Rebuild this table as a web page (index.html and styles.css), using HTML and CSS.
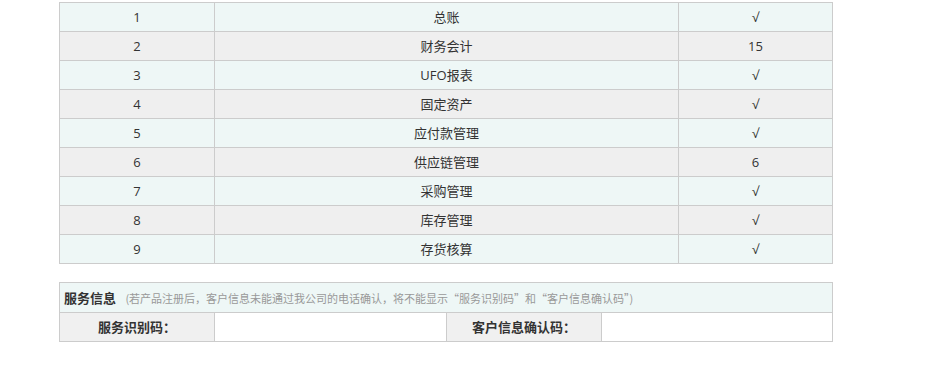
FILE: index.html
```html
<!DOCTYPE html>
<html lang="zh-CN">
<head>
  <meta charset="UTF-8" />
  <title>产品授权信息</title>
  <link rel="stylesheet" href="styles.css">
</head>
<body>
  <div class="wrap">
    <table class="module-list">
      <colgroup>
        <col class="c-no">
        <col class="c-name">
        <col class="c-count">
      </colgroup>
      <tbody>
        <tr><td>1</td><td>总账</td><td>√</td></tr>
        <tr><td>2</td><td>财务会计</td><td>15</td></tr>
        <tr><td>3</td><td>UFO报表</td><td>√</td></tr>
        <tr><td>4</td><td>固定资产</td><td>√</td></tr>
        <tr><td>5</td><td>应付款管理</td><td>√</td></tr>
        <tr><td>6</td><td>供应链管理</td><td>6</td></tr>
        <tr><td>7</td><td>采购管理</td><td>√</td></tr>
        <tr><td>8</td><td>库存管理</td><td>√</td></tr>
        <tr><td>9</td><td>存货核算</td><td>√</td></tr>
      </tbody>
    </table>

    <table class="service">
      <colgroup>
        <col class="c-label">
        <col class="c-value">
        <col class="c-label">
        <col class="c-value2">
      </colgroup>
      <tr>
        <td class="service-head" colspan="4">
          <b>服务信息</b>
          <span class="note">(若产品注册后，客户信息未能通过我公司的电话确认，将不能显示“服务识别码”和“客户信息确认码”)</span>
        </td>
      </tr>
      <tr>
        <td class="label">服务识别码：</td>
        <td></td>
        <td class="label">客户信息确认码：</td>
        <td></td>
      </tr>
    </table>
  </div>
</body>
</html>
```

FILE: styles.css
```css
* {
  margin: 0;
  padding: 0;
  box-sizing: border-box;
}

body {
  font-family: "Open Sans", "Noto Sans CJK SC", sans-serif;
  font-size: 13px;
  color: #333;
  background: #fff;
}

.wrap {
  padding: 2px 0 0 59px;
}

table {
  width: 773px;
  border-collapse: collapse;
  table-layout: fixed;
}

td {
  border: 1px solid #cccccc;
  height: 29px;
  text-align: center;
  vertical-align: middle;
  line-height: 16px;
}

/* module list */
.c-no { width: 155px; }
.c-name { width: 464px; }
.c-count { width: 154px; }

.module-list tr:nth-child(odd) td {
  background: #eef7f6;
}

.module-list tr:nth-child(even) td {
  background: #efefef;
}

/* service info */
.service {
  margin-top: 18px;
}

.c-label { width: 155px; }
.c-value { width: 232px; }
.c-value2 { width: 231px; }

.service-head {
  text-align: left;
  padding-left: 4px;
  background: #eef7f6;
  height: 30px;
}

.service-head b {
  font-weight: bold;
}

.note {
  font-family: "Noto Sans CJK SC", sans-serif;
  font-size: 11px;
  color: #999;
  margin-left: 6px;
}

.label {
  background: #f0f0f0;
  font-weight: bold;
}
```
